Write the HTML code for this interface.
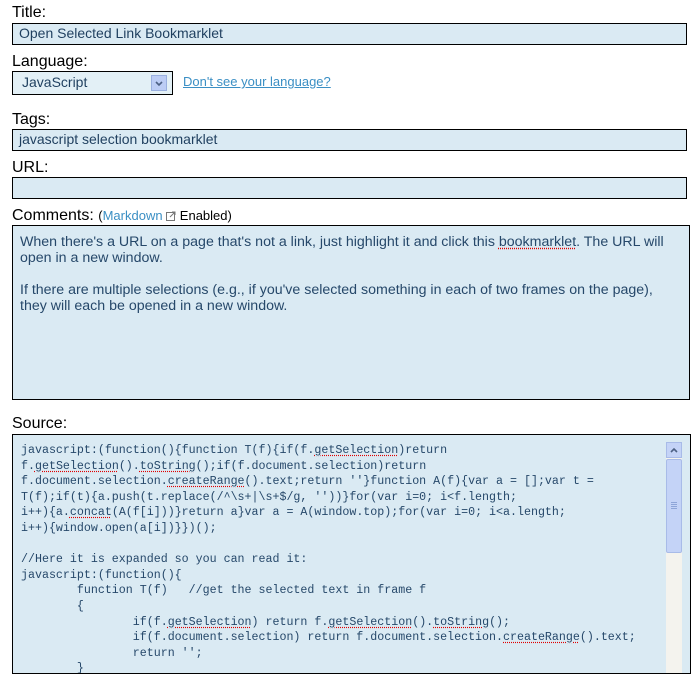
<!DOCTYPE html>
<html><head><style>
body{margin:0;background:#fff;width:700px;height:664px;overflow:hidden;position:relative;font-family:"Liberation Sans",Arial,sans-serif;}
.a{position:absolute;}
.lbl{font-size:16px;color:#000;line-height:18px;}
.box{position:absolute;border:1px solid #000;background:#daeaf3;box-sizing:border-box;}
.in{font-size:14px;color:#1f3f5f;padding-left:6px;line-height:19px;}
.ct{font-size:14.2px;color:#26486a;line-height:16px;}
pre{margin:0;font-family:"Liberation Mono",monospace;font-size:11.65px;line-height:15.6px;color:#26486a;}
.u{text-decoration-line:underline;text-decoration-style:dotted;text-decoration-color:#e00000;text-underline-offset:2px;}
</style></head><body>
<div class="a lbl" style="left:12px;top:4px">Title:</div>
<div class="box in" style="left:12px;top:23px;width:675px;height:22px">Open Selected Link Bookmarklet</div>
<div class="a lbl" style="left:12px;top:53px">Language:</div>
<div class="box" style="left:12px;top:71px;width:161px;height:24px;background:#e3f0f6">
<span class="a" style="left:9px;top:2px;font-size:14px;color:#1f3f5f">JavaScript</span>
<div class="a" style="left:138px;top:3px;width:16px;height:16px;background:#bccdf5;border:1px solid #9ab0e0;box-sizing:border-box"><svg width="14" height="14" style="position:absolute;left:0;top:0"><path d="M4 6l3 3 3-3" stroke="#4d6185" stroke-width="1.6" fill="none"/></svg></div>
</div>
<div class="a" style="left:183px;top:74px;font-size:13px;color:#3b8fc4;text-decoration:underline">Don't see your language?</div>
<div class="a lbl" style="left:12px;top:111px">Tags:</div>
<div class="box in" style="left:12px;top:129px;width:675px;height:22px">javascript selection bookmarklet</div>
<div class="a lbl" style="left:12px;top:159px">URL:</div>
<div class="box" style="left:12px;top:177px;width:675px;height:22px"></div>
<div class="a lbl" style="left:12px;top:207px">Comments: <span style="font-size:13px;color:#000">(<span style="color:#3b8fc4">Markdown</span> <svg width="10" height="10" style="vertical-align:-1px"><rect x="0.5" y="1.5" width="8" height="8" fill="none" stroke="#777"/><path d="M4 6L9 1M6 1h3v3" stroke="#777" fill="none"/></svg> Enabled)</span></div>
<div class="box ct" style="left:12px;top:225px;width:678px;height:175px;padding:8px 7px;white-space:nowrap">When there's a URL on a page that's not a link, just highlight it and click this <span class="u">bookmarklet</span>. The URL will<br>open in a new window.<br><br>If there are multiple selections (e.g., if you've selected something in each of two frames on the page),<br>they will each be opened in a new window.</div>
<div class="a lbl" style="left:12px;top:415px">Source:</div>
<div class="box" style="left:12px;top:434px;width:679px;height:240px;overflow:hidden">
<pre class="a" style="left:8px;top:8px">javascript:(function(){function T(f){if(f.<span class="u">getSelection</span>)return
f.<span class="u">getSelection</span>().<span class="u">toString</span>();if(f.document.selection)return
f.document.selection.<span class="u">createRange</span>().text;return ''}function A(f){var a = [];var t =
T(f);if(t){a.push(t.replace(/^\s+|\s+$/g, ''))}for(var i=0; i&lt;f.length;
i++){a.<span class="u">concat</span>(A(f[i]))}return a}var a = A(window.top);for(var i=0; i&lt;a.length;
i++){window.open(a[i])}})();

//Here it is expanded so you can read it:
javascript:(function(){
        function T(f)   //get the selected text in frame f
        {
                if(f.<span class="u">getSelection</span>) return f.<span class="u">getSelection</span>().<span class="u">toString</span>();
                if(f.document.selection) return f.document.selection.<span class="u">createRange</span>().text;
                return '';
        }</pre>
<div class="a" style="left:653px;top:7px;width:16px;height:240px;background:#f4f3ee"></div>
<div class="a" style="left:653px;top:7px;width:16px;height:16px;background:#c4d3f7;border:1px solid #a8bbe8;box-sizing:border-box"><svg width="14" height="14"><path d="M4 9l3-3 3 3" stroke="#4d6185" stroke-width="1.6" fill="none"/></svg></div>
<div class="a" style="left:653px;top:24px;width:16px;height:94px;background:#c4d3f7;border:1px solid #a8bbe8;border-radius:2px;box-sizing:border-box"><div class="a" style="left:4px;top:42px;width:6px;height:1px;background:#8ea5d8;box-shadow:0 2px #8ea5d8,0 4px #8ea5d8,0 6px #8ea5d8"></div></div>
</div>
</body></html>
